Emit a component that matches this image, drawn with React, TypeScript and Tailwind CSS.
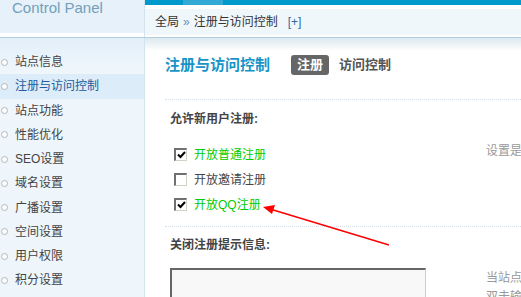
const menu = [
  "站点信息",
  "注册与访问控制",
  "站点功能",
  "性能优化",
  "SEO设置",
  "域名设置",
  "广播设置",
  "空间设置",
  "用户权限",
  "积分设置",
];

function CheckBox({ checked }: { checked: boolean }) {
  return (
    <span className="flex h-[13px] w-[13px] items-center justify-center border-t-2 border-l-2 border-t-[#707070] border-l-[#707070] border-b border-r border-b-[#d4d0c8] border-r-[#d4d0c8] bg-white">
      {checked && (
        <svg width="9" height="8" viewBox="0 0 9 8">
          <polyline points="1,3.5 3.5,6 8,1" fill="none" stroke="#000" strokeWidth="2" />
        </svg>
      )}
    </span>
  );
}

function OptionRow({ checked, label }: { checked: boolean; label: string }) {
  return (
    <div className="flex h-[25px] items-center gap-[7px] pl-[9px]">
      <CheckBox checked={checked} />
      <span className={checked ? "text-[#00cc00]" : "text-[#444]"}>{label}</span>
    </div>
  );
}

export default function App() {
  return (
    <div className="relative h-[297px] w-[521px] overflow-hidden bg-white font-['Liberation_Sans','Noto_Sans_CJK_SC',sans-serif] text-[12px] leading-[18px] text-[#444]">
      {/* top header */}
      <div className="flex h-[38px] border-b border-[#b3cfdf]">
        <div className="w-[145px] shrink-0 border-r border-[#d3e3ee]">
          <div className="h-[33px] bg-[#e7f1f9] px-[12px] text-[15px] leading-[15px] text-[#72a0bb]">
            Control Panel
          </div>
        </div>
        <div className="min-w-0 flex-1">
          <div className="flex h-[5px] bg-[#0099cc]">
            <div className="ml-[38px] w-[40px] bg-[#33aad6]" />
          </div>
          <div className="mt-[4px] flex h-[26px] items-center gap-[4px] bg-[#f0f7fb] pl-[10px] text-[#333]">
            <span>全局</span>
            <span className="text-[#6b8fb0]">»</span>
            <span>注册与访问控制</span>
            <span className="ml-[6px] text-[#2c68a8]">[+]</span>
          </div>
        </div>
      </div>

      {/* body */}
      <div className="flex h-[259px]">
        <div className="w-[145px] shrink-0 border-r border-[#d3e3ee] bg-[linear-gradient(#e2eef8,#eef6fc_30px)] pt-[12px]">
          {menu.map((m) => (
            <div
              key={m}
              className={
                "flex h-[24.25px] items-center gap-[7px] pl-[1px] " +
                (m === "注册与访问控制" ? "bg-[#dcecf8] text-[#245c9c]" : "text-[#444]")
              }
            >
              <span className="h-[7px] w-[7px] rounded-full border border-[#b5b5b5] bg-white" />
              <span>{m}</span>
            </div>
          ))}
        </div>

        <div className="min-w-0 flex-1 overflow-hidden bg-[linear-gradient(#dce8ef,#fff_13px)] pl-[20px] pt-[17px]">
          <div className="flex h-[20px] items-center">
            <span className="text-[15px] font-bold text-[#1994c8]">注册与访问控制</span>
            <span className="ml-[21px] rounded-[3px] bg-[#666] px-[6px] text-[13px] font-bold leading-[20px] text-white">
              注册
            </span>
            <span className="ml-[10px] text-[13px] font-bold text-[#555]">访问控制</span>
          </div>

          <div className="mt-[24px] border-t border-dotted border-[#d6e0e8]">
            <div className="flex">
              <div className="w-[321px] shrink-0">
                <div className="pl-[5px] pt-[10px] font-bold text-[#444]">允许新用户注册:</div>
                <div className="mt-[14px]">
                  <OptionRow checked label="开放普通注册" />
                  <OptionRow checked={false} label="开放邀请注册" />
                  <OptionRow checked label="开放QQ注册" />
                </div>
              </div>
              <div className="whitespace-nowrap pt-[42px] text-[#999]">设置是否允许</div>
            </div>
          </div>

          <div className="mt-[9px] border-t border-dotted border-[#d6e0e8]">
            <div className="flex">
              <div className="w-[321px] shrink-0">
                <div className="pl-[5px] pt-[9px] font-bold text-[#444]">关闭注册提示信息:</div>
                <div className="ml-[5px] mt-[14px] h-[40px] w-[256px] border-t-2 border-l-2 border-t-[#666] border-l-[#666] border-r border-r-[#ccc] bg-[#f8f8f8]" />
              </div>
              <div className="whitespace-nowrap pt-[42px] leading-[19px] text-[#999]">
                <div>当站点关闭</div>
                <div>双击输入</div>
              </div>
            </div>
          </div>
        </div>
      </div>

      {/* annotation arrow */}
      <svg className="absolute left-0 top-0" width="521" height="297" viewBox="0 0 521 297">
        <line x1="389" y1="245" x2="270" y2="209" stroke="#ff0000" strokeWidth="1.5" />
        <polygon points="263,207 275,205 272,214" fill="#ff0000" />
      </svg>
    </div>
  );
}
